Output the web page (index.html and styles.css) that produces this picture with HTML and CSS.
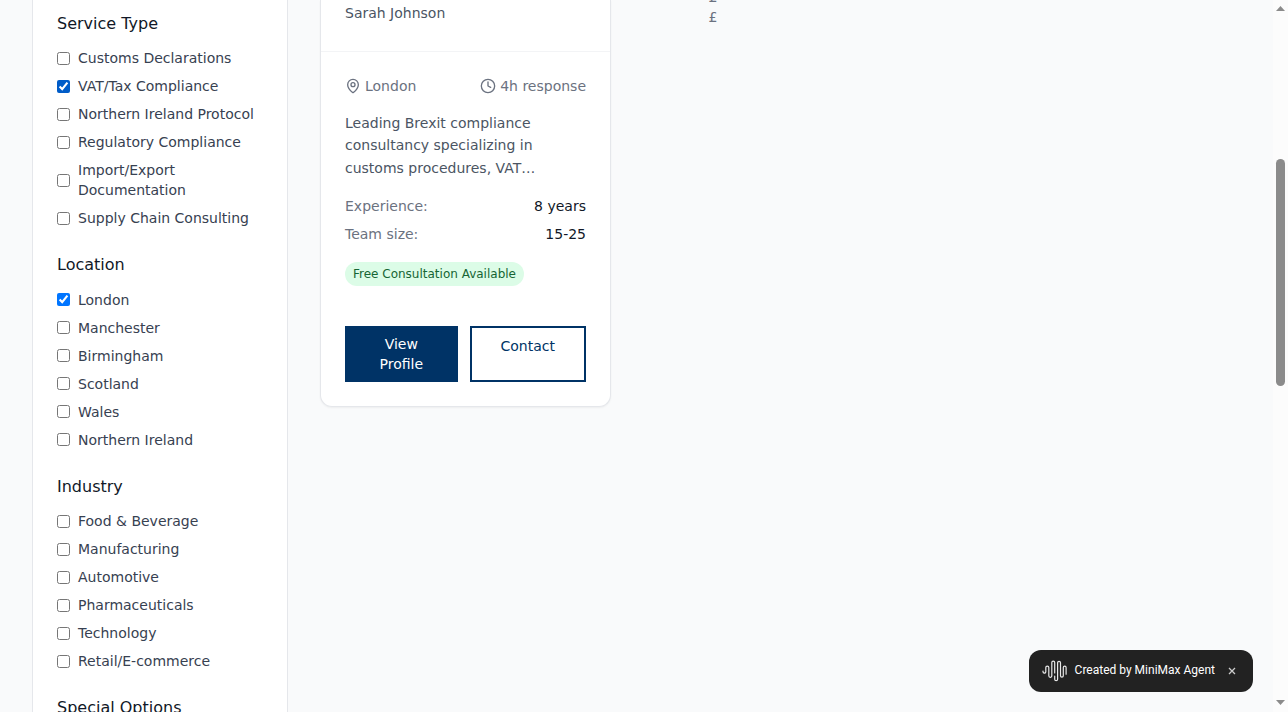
FILE: index.html
```html
<!DOCTYPE html>
<html lang="en">
<head>
<meta charset="utf-8">
<title>Consultants</title>
<link rel="stylesheet" href="styles.css">
</head>
<body>
<div class="page">
  <aside class="filters">
    <section class="group">
      <h3>Service Type</h3>
      <label><input type="checkbox"><span>Customs Declarations</span></label>
      <label><input type="checkbox" class="active" checked><span>VAT/Tax Compliance</span></label>
      <label><input type="checkbox"><span>Northern Ireland Protocol</span></label>
      <label><input type="checkbox"><span>Regulatory Compliance</span></label>
      <label><input type="checkbox"><span>Import/Export Documentation</span></label>
      <label><input type="checkbox"><span>Supply Chain Consulting</span></label>
    </section>
    <section class="group">
      <h3>Location</h3>
      <label><input type="checkbox" checked><span>London</span></label>
      <label><input type="checkbox"><span>Manchester</span></label>
      <label><input type="checkbox"><span>Birmingham</span></label>
      <label><input type="checkbox"><span>Scotland</span></label>
      <label><input type="checkbox"><span>Wales</span></label>
      <label><input type="checkbox"><span>Northern Ireland</span></label>
    </section>
    <section class="group">
      <h3>Industry</h3>
      <label><input type="checkbox"><span>Food &amp; Beverage</span></label>
      <label><input type="checkbox"><span>Manufacturing</span></label>
      <label><input type="checkbox"><span>Automotive</span></label>
      <label><input type="checkbox"><span>Pharmaceuticals</span></label>
      <label><input type="checkbox"><span>Technology</span></label>
      <label><input type="checkbox"><span>Retail/E-commerce</span></label>
    </section>
    <section class="group">
      <h3>Special Options</h3>
    </section>
  </aside>
  <main class="results">
    <article class="card">
      <header class="card-head">Sarah Johnson</header>
      <div class="card-body">
        <div class="row meta">
          <span class="meta-item"><svg class="icon" viewBox="0 0 24 24"><path d="M20 10c0 4.993-5.539 10.193-7.399 11.799a1 1 0 0 1-1.202 0C9.539 20.193 4 14.993 4 10a8 8 0 0 1 16 0"/><circle cx="12" cy="10" r="3"/></svg>London</span>
          <span class="meta-item"><svg class="icon" viewBox="0 0 24 24"><circle cx="12" cy="12" r="10"/><path d="M12 6v6l4 2"/></svg>4h response</span>
        </div>
        <p class="summary">Leading Brexit compliance<br>consultancy specializing in<br>customs procedures, VAT…</p>
        <div class="row fact"><span>Experience:</span><b>8 years</b></div>
        <div class="row fact"><span>Team size:</span><b>15-25</b></div>
        <div class="badge">Free Consultation Available</div>
        <div class="actions">
          <a class="btn solid">View<br>Profile</a>
          <a class="btn outline">Contact</a>
        </div>
      </div>
    </article>
    <div class="prices"><span>£</span><span>£</span></div>
  </main>
</div>
<div class="scrollbar">
  <svg class="arrow" viewBox="0 0 9 5"><path d="M0 5L4.5 0L9 5Z"/></svg>
  <div class="thumb"></div>
  <svg class="arrow" viewBox="0 0 9 5"><path d="M0 0L4.5 5L9 0Z"/></svg>
</div>
<div class="toast">
  <svg class="wave" viewBox="0 0 25 22"><path d="M1 11v.8a1.4 1.4 0 0 0 2.8 0V7.600a1.500 1.500 0 0 1 3 0v8.200a1.500 1.500 0 0 0 3 0V2.500a1.450 1.450 0 0 1 2.900 0V13M12.700 16.200v3a1.450 1.450 0 0 0 2.900 0V2.800a1.450 1.450 0 0 1 2.900 0v13a1.400 1.400 0 0 0 2.800 0V7.600a1.400 1.400 0 0 1 2.800 0v6.600"/></svg>
  <span class="toast-text">Created by MiniMax Agent</span>
  <svg class="close" viewBox="0 0 8 8"><path d="M1 1l6 6M7 1L1 7"/></svg>
</div>
</body>
</html>
```
FILE: styles.css
```css
* { box-sizing: border-box; }
body {
  margin: 0;
  height: 712px;
  overflow: hidden;
  background: #f9fafb;
  font: 14px/20px "DejaVu Sans", sans-serif;
  color: #374151;
}
.page {
  display: flex;
  align-items: flex-start;
  gap: 32px;
  height: 712px;
  padding: 0 32px;
  overflow: hidden;
}
.filters {
  width: 256px;
  min-height: 712px;
  padding: 10.55px 24px 0;
  background: #fff;
  border: solid #e5e7eb;
  border-width: 0 1px;
  flex: none;
}
.group { display: flex; flex-direction: column; gap: 8px; margin-bottom: 24px; }
.group h3 { margin: 0 0 4px; font-size: 16px; line-height: 25.6px; font-weight: 400; color: #111827; }
.group label { display: flex; align-items: center; }
.group input { width: 13px; height: 13px; margin: 0 8px 0 0; flex: none; }
.group .active { accent-color: #005cc8; }
.results { display: flex; align-items: flex-start; }
.card {
  width: 291px;
  background: #fff;
  border: 1px solid #e5e7eb;
  border-top: 0;
  border-radius: 0 0 12px 12px;
  box-shadow: 0 1px 2px rgba(0, 0, 0, .05);
}
.card-head { height: 52px; padding: 3px 24px; color: #4b5563; border-bottom: 1px solid #f3f4f6; }
.card-body { padding: 24px; }
.row { display: flex; justify-content: space-between; }
.meta { color: #6b7280; margin-bottom: 16px; }
.meta-item { display: flex; align-items: center; gap: 4px; }
.icon { width: 16px; height: 16px; fill: none; stroke: currentColor; stroke-width: 2; stroke-linecap: round; stroke-linejoin: round; }
.summary { margin: 0 0 17px; line-height: 22.4px; color: #4b5563; }
.fact { margin-bottom: 8px; color: #6b7280; }
.fact b { font-weight: 400; color: #111827; }
.badge {
  width: fit-content;
  margin: 17.8px 0 40px;
  padding: 4px 8px;
  border-radius: 12px;
  background: #dcfce7;
  color: #166534;
  font-size: 12px;
  line-height: 16px;
}
.actions { display: flex; gap: 12px; }
.btn { flex: 1 1 0; padding: 8px 16px; text-align: center; }
.solid { background: #003366; color: #fff; }
.outline { border: 2px solid #003366; color: #003366; }
.prices { display: flex; flex-direction: column; margin: -13px 0 0 97.4px; color: #6b7280; }
.scrollbar {
  position: absolute;
  top: 0;
  right: 0;
  width: 15px;
  height: 712px;
  padding: 6px 0 7px;
  display: flex;
  flex-direction: column;
  align-items: center;
  background: #fcfcfc;
}
.arrow { width: 9px; height: 5px; fill: #8b8b8b; }
.thumb { width: 9px; height: 227px; margin: 148px 0 auto; border-radius: 5px; background: #8b8b8b; }
.toast {
  position: absolute;
  left: 1029px;
  top: 650px;
  width: 224px;
  height: 42px;
  padding: 0 17px 0 13px;
  display: flex;
  align-items: center;
  border-radius: 12px;
  background: #222;
  color: #fff;
  font: 400 12px/16px Roboto, sans-serif;
}
.wave { width: 25px; height: 22px; margin-right: 7.6px; fill: none; stroke: #e8e8e8; stroke-width: 1.2; stroke-linecap: round; }
.toast-text { white-space: nowrap; padding-bottom: 2px; }
.close { width: 8px; height: 8px; margin-left: auto; fill: none; stroke: #ccc; stroke-width: 1.3; }
```
